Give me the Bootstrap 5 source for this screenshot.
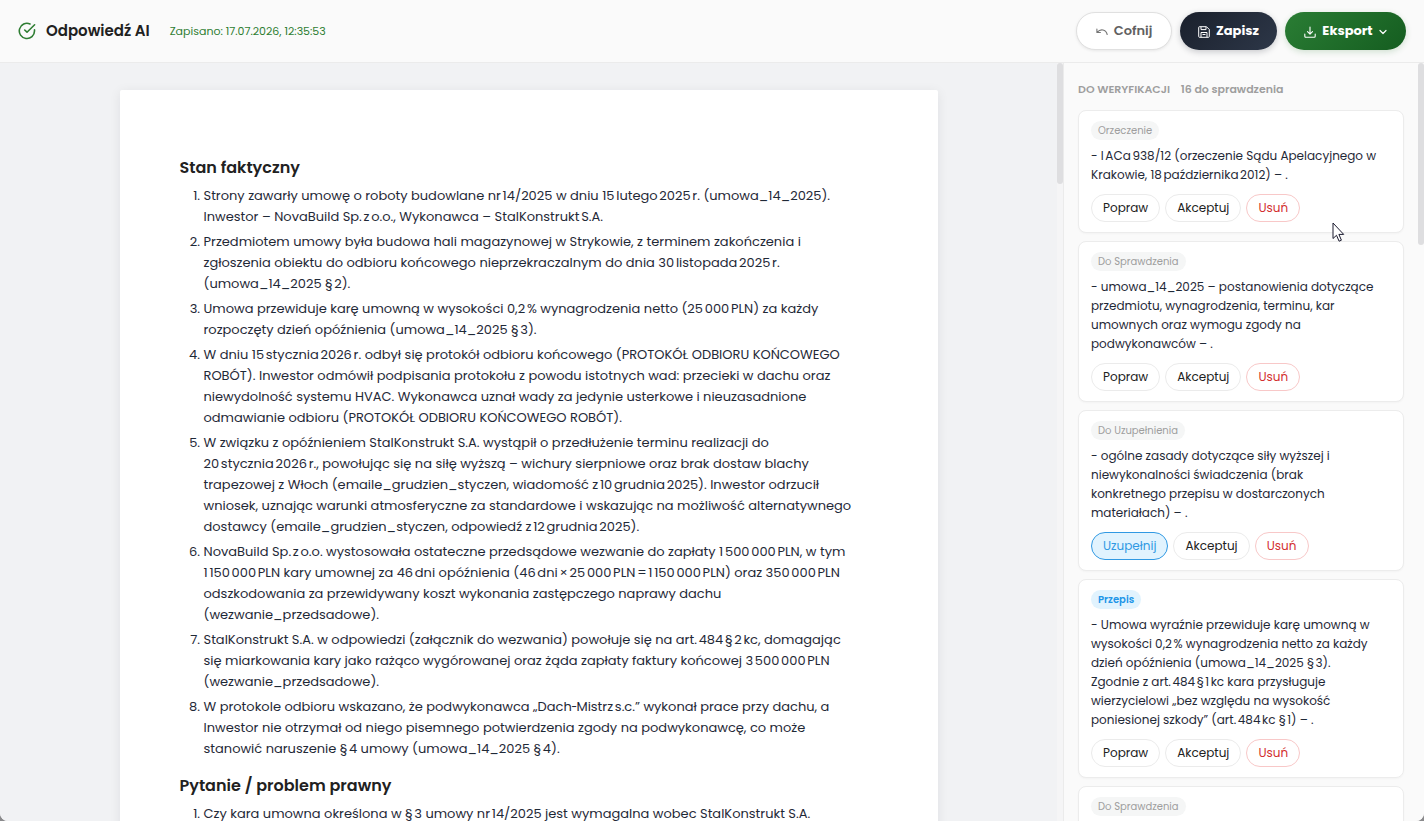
<!DOCTYPE html>
<html lang="pl">
<head>
<meta charset="utf-8">
<meta name="viewport" content="width=device-width, initial-scale=1">
<title>Odpowiedź AI</title>
<link href="https://cdn.jsdelivr.net/npm/bootstrap@5.3.0/dist/css/bootstrap.min.css" rel="stylesheet">
<style>
  body { font-family: Poppins, Inter, "Open Sans", sans-serif; background: #8a8a8c; color: #1f2937; }
  .app { height: 100vh; background: #fafafa; border-radius: 0 0 8px 8px; }
  .topbar { padding: 12px 18px; border-bottom: 1px solid #ebebeb; background: #fafafa; }
  .brand { font-size: 15px; line-height: 24px; font-weight: 600; color: #212121; margin: 0 20px 0 10px; }
  .saved { font-size: 11px; line-height: 18px; color: #2e7d32; }
  .tool { height: 38px; border-radius: 19px; font-size: 13px; font-weight: 600; padding: 0 18px; gap: 6px; }
  .tool svg { margin-top: 2px; }
  .tool-undo { min-width: 96px; background: #fff; border: 1px solid #e0e0e0; color: #616161; box-shadow: 0 1px 3px rgba(0,0,0,.08); }
  .tool-save { min-width: 97px; font-weight: 700; background: linear-gradient(135deg, #1a202c, #2d3748); border: 0; color: #fff; box-shadow: 0 2px 6px rgba(26,32,44,.22); }
  .tool-export { min-width: 121px; font-weight: 700; background: linear-gradient(135deg, #2a7d34, #155d20); border: 0; color: #fff; box-shadow: 0 2px 6px rgba(46,125,50,.2); }
  .desk { background: #f1f2f4; padding: 27px 24px 0; }
  .paper { max-width: 818px; padding: 66px 60px; background: #fff; border-radius: 2px; box-shadow: 0 2px 12px rgba(15,23,42,.08); }
  .paper h2 { font-size: 16px; line-height: 24px; font-weight: 600; color: #212121; margin: 0 0 5px; }
  .paper ol { font-size: 13px; line-height: 21px; padding-left: 24px; margin: 0 0 15px; }
  .paper li + li { margin-top: 4px; }
  .track { width: 6px; }
  .track-desk { background: #f5f5f6; }
  .thumb { background: #dedee0; border-radius: 3px; }
  .thumb-desk { height: 16%; }
  .thumb-side { height: 24%; }
  .side { width: 361px; background: #fafafa; border-left: 1px solid #ebebeb; }
  .side-body { padding: 17px 14px 0; }
  .side h2 { font-size: 11px; line-height: 18px; font-weight: 600; color: #9e9e9e; margin: 0 0 12px; }
  .review { flex: none; padding: 10px 12px; background: #fff; border: 1px solid #ececec; border-radius: 8px; box-shadow: 0 1px 2px rgba(0,0,0,.03); }
  .review p { font-size: 12px; line-height: 19px; margin: 6px 0 10px; }
  .tag { font-size: 10px; line-height: 19px; padding: 0 7px; border-radius: 10px; background: #f5f6f6; color: #9e9e9e; }
  .tag-law { background: #e1f3fe; color: #2196e8; font-weight: 600; }
  .acts { gap: 5px; }
  .act { height: 28px; padding: 0 11px; font-size: 12px; line-height: 18px; border-radius: 14px; background: #fff; border: 1px solid #ebebeb; color: #212121; }
  .act-del { border-color: #f8c8c8; color: #d32f2f; min-width: 54px; }
  .act-fill { border-color: #3099e3; background: #e1f3fe; color: #3099e3; min-width: 77px; }
  .act-fix { min-width: 69px; }
  .act-ok { min-width: 76px; }
  .pointer { left: 1332px; top: 222px; pointer-events: none; }
</style>
</head>
<body>
<div class="app d-flex flex-column overflow-hidden position-relative">
  <header class="topbar d-flex align-items-center">
    <svg width="18" height="18" viewBox="0 0 18 18" fill="none" stroke="#2e7d32" stroke-width="1.6" stroke-linecap="round" stroke-linejoin="round" aria-hidden="true"><path d="M16.5 7.7v1.1A7.6 7.6 0 1 1 12 2"/><path d="M16.6 2.8 9 10.2 6.7 8"/></svg>
    <h1 class="brand">Odpowiedź AI</h1>
    <span class="saved">Zapisano: 17.07.2026, 12:35:53</span>
    <div class="d-flex gap-2 ms-auto">
      <button type="button" class="btn tool tool-undo d-flex align-items-center justify-content-center">
        <svg width="12" height="12" viewBox="0 0 12 12" fill="none" stroke="#757575" stroke-width="1.1" stroke-linecap="round" stroke-linejoin="round" aria-hidden="true"><path d="M.9 3v3.500h3.500M1.100 6.300C4.600 2.500 9.800 3.300 11.200 8.500"/></svg>Cofnij</button>
      <button type="button" class="btn tool tool-save d-flex align-items-center justify-content-center">
        <svg width="12" height="12" viewBox="0 0 12 12" fill="none" stroke="#fff" stroke-width="1" stroke-linejoin="round" aria-hidden="true"><path d="M1.5.7h7L11.3 3.500v7a.8.8 0 0 1-.8.8h-9a.8.8 0 0 1-.8-.8v-9a.8.8 0 0 1 .8-.8z"/><path d="M3 .9v2.700h5V.9M3 11.200V6.500h6v4.700M4.500 8.500h3"/></svg>Zapisz</button>
      <button type="button" class="btn tool tool-export d-flex align-items-center justify-content-center" aria-haspopup="true">
        <svg width="12" height="12" viewBox="0 0 12 12" fill="none" stroke="#fff" stroke-width="1.1" stroke-linecap="round" stroke-linejoin="round" aria-hidden="true"><path d="M.8 8v2.300a1 1 0 0 0 1 1h8.400a1 1 0 0 0 1-1V8M6 1v7M3.500 5.700 6 8.200l2.500-2.500"/></svg>Eksport
        <svg width="8" height="8" viewBox="0 0 8 8" fill="none" stroke="#fff" stroke-width="1.2" stroke-linecap="round" stroke-linejoin="round" aria-hidden="true"><path d="m1 2.500 3 3 3-3"/></svg></button>
    </div>
  </header>
  <div class="d-flex flex-grow-1 overflow-hidden">
    <main class="desk flex-grow-1 overflow-hidden">
      <article class="paper mx-auto">
        <h2>Stan faktyczny</h2>
        <ol>
          <li>Strony zawarły umowę o roboty budowlane nr&#8239;14/2025 w dniu 15&#8239;lutego&#8239;2025&#8239;r. (umowa_14_2025).<br>Inwestor – NovaBuild Sp.&#8239;z&#8239;o.o., Wykonawca – StalKonstrukt&#8239;S.A.</li>
          <li>Przedmiotem umowy była budowa hali magazynowej w Strykowie, z terminem zakończenia i<br>zgłoszenia obiektu do odbioru końcowego nieprzekraczalnym do dnia 30&#8239;listopada&#8239;2025&#8239;r.<br>(umowa_14_2025 §&#8239;2).</li>
          <li>Umowa przewiduje karę umowną w wysokości 0,2&#8239;% wynagrodzenia netto (25&#8239;000&#8239;PLN) za każdy<br>rozpoczęty dzień opóźnienia (umowa_14_2025 §&#8239;3).</li>
          <li>W dniu 15&#8239;stycznia&#8239;2026&#8239;r. odbył się protokół odbioru końcowego (PROTOKÓŁ ODBIORU KOŃCOWEGO<br>ROBÓT). Inwestor odmówił podpisania protokołu z powodu istotnych wad: przecieki w dachu oraz<br>niewydolność systemu HVAC. Wykonawca uznał wady za jedynie usterkowe i nieuzasadnione<br>odmawianie odbioru (PROTOKÓŁ ODBIORU KOŃCOWEGO ROBÓT).</li>
          <li>W związku z opóźnieniem StalKonstrukt S.A. wystąpił o przedłużenie terminu realizacji do<br>20&#8239;stycznia&#8239;2026&#8239;r., powołując się na siłę wyższą – wichury sierpniowe oraz brak dostaw blachy<br>trapezowej z Włoch (emaile_grudzien_styczen, wiadomość z&#8239;10&#8239;grudnia&#8239;2025). Inwestor odrzucił<br>wniosek, uznając warunki atmosferyczne za standardowe i wskazując na możliwość alternatywnego<br>dostawcy (emaile_grudzien_styczen, odpowiedź z&#8239;12&#8239;grudnia&#8239;2025).</li>
          <li>NovaBuild Sp.&#8239;z&#8239;o.o. wystosowała ostateczne przedsądowe wezwanie do zapłaty 1&#8239;500&#8239;000&#8239;PLN, w tym<br>1&#8239;150&#8239;000&#8239;PLN kary umownej za 46&#8239;dni opóźnienia (46&#8239;dni&#8239;×&#8239;25&#8239;000&#8239;PLN&#8239;=&#8239;1&#8239;150&#8239;000&#8239;PLN) oraz 350&#8239;000&#8239;PLN<br>odszkodowania za przewidywany koszt wykonania zastępczego naprawy dachu<br>(wezwanie_przedsadowe).</li>
          <li>StalKonstrukt S.A. w odpowiedzi (załącznik do wezwania) powołuje się na art.&#8239;484&#8239;§&#8239;2&#8239;kc, domagając<br>się miarkowania kary jako rażąco wygórowanej oraz żąda zapłaty faktury końcowej 3&#8239;500&#8239;000&#8239;PLN<br>(wezwanie_przedsadowe).</li>
          <li>W protokole odbioru wskazano, że podwykonawca „Dach‑Mistrz&#8239;s.c.” wykonał prace przy dachu, a<br>Inwestor nie otrzymał od niego pisemnego potwierdzenia zgody na podwykonawcę, co może<br>stanowić naruszenie §&#8239;4 umowy (umowa_14_2025 §&#8239;4).</li>
        </ol>
        <h2>Pytanie / problem prawny</h2>
        <ol>
          <li>Czy kara umowna określona w §&#8239;3 umowy nr&#8239;14/2025 jest wymagalna wobec StalKonstrukt S.A.</li>
        </ol>
      </article>
    </main>
    <div class="track track-desk flex-shrink-0"><div class="thumb thumb-desk"></div></div>
    <aside class="side d-flex flex-shrink-0">
      <div class="side-body flex-grow-1 overflow-hidden">
        <h2>DO WERYFIKACJI <span class="ms-2">16 do sprawdzenia</span></h2>
        <div class="d-flex flex-column gap-2">
          <section class="review">
            <div class="d-flex"><span class="tag">Orzeczenie</span></div>
            <p>- I&#8239;ACa&#8239;938/12 (orzeczenie Sądu Apelacyjnego w<br>Krakowie, 18&#8239;października&#8239;2012) – .</p>
            <div class="d-flex acts"><button type="button" class="btn act act-fix">Popraw</button><button type="button" class="btn act act-ok">Akceptuj</button><button type="button" class="btn act act-del">Usuń</button></div>
          </section>
          <section class="review">
            <div class="d-flex"><span class="tag">Do Sprawdzenia</span></div>
            <p>- umowa_14_2025 – postanowienia dotyczące<br>przedmiotu, wynagrodzenia, terminu, kar<br>umownych oraz wymogu zgody na<br>podwykonawców – .</p>
            <div class="d-flex acts"><button type="button" class="btn act act-fix">Popraw</button><button type="button" class="btn act act-ok">Akceptuj</button><button type="button" class="btn act act-del">Usuń</button></div>
          </section>
          <section class="review">
            <div class="d-flex"><span class="tag">Do Uzupełnienia</span></div>
            <p>- ogólne zasady dotyczące siły wyższej i<br>niewykonalności świadczenia (brak<br>konkretnego przepisu w dostarczonych<br>materiałach) – .</p>
            <div class="d-flex acts"><button type="button" class="btn act act-fill">Uzupełnij</button><button type="button" class="btn act act-ok">Akceptuj</button><button type="button" class="btn act act-del">Usuń</button></div>
          </section>
          <section class="review">
            <div class="d-flex"><span class="tag tag-law">Przepis</span></div>
            <p>- Umowa wyraźnie przewiduje karę umowną w<br>wysokości 0,2&#8239;% wynagrodzenia netto za każdy<br>dzień opóźnienia (umowa_14_2025 §&#8239;3).<br>Zgodnie z art.&#8239;484&#8239;§&#8239;1&#8239;kc kara przysługuje<br>wierzycielowi „bez względu na wysokość<br>poniesionej szkody” (art.&#8239;484&#8239;kc §&#8239;1) – .</p>
            <div class="d-flex acts"><button type="button" class="btn act act-fix">Popraw</button><button type="button" class="btn act act-ok">Akceptuj</button><button type="button" class="btn act act-del">Usuń</button></div>
          </section>
          <section class="review pb-5">
            <div class="d-flex"><span class="tag">Do Sprawdzenia</span></div>
          </section>
        </div>
      </div>
      <div class="track flex-shrink-0"><div class="thumb thumb-side"></div></div>
    </aside>
  </div>
  <svg class="pointer position-absolute" width="13" height="21" viewBox="0 0 13 21" fill="#fff" stroke="#1a1a2e" stroke-width="1" stroke-linejoin="round" aria-hidden="true"><path d="M1 1v15.500l3.500-3.200 2.600 5.900 2.300-1-2.500-5.800h4.800z"/></svg>
</div>
<script src="https://cdn.jsdelivr.net/npm/bootstrap@5.3.0/dist/js/bootstrap.bundle.min.js"></script>
</body>
</html>
